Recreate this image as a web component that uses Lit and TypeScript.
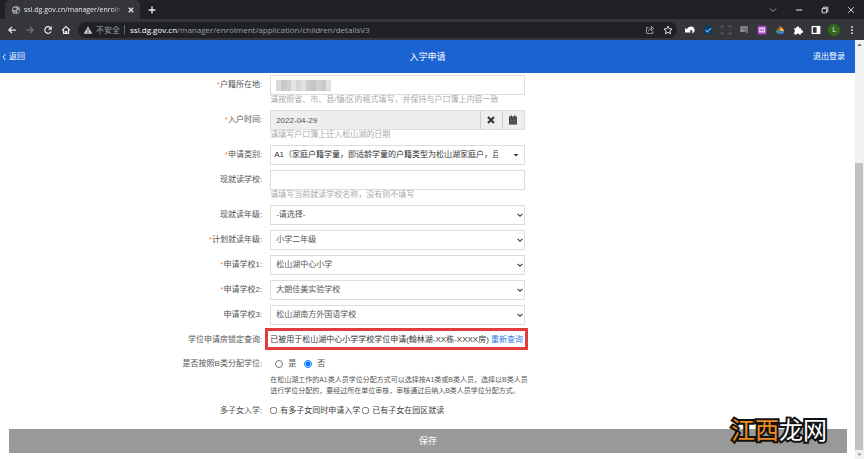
import { LitElement, html, css, svg, nothing } from "lit";
import { customElement } from "lit/decorators.js";

const chevron = html`<svg class="chev" viewBox="0 0 8 8" aria-hidden="true"><path d="M1.6 2.8 4 5.2 6.4 2.8" fill="none" stroke="#444" stroke-width="1.2"/></svg>`;
const caret = html`<svg class="chev caret" viewBox="0 0 8 8" aria-hidden="true"><path d="M1.6 3h4.8L4 5.6z" fill="#333"/></svg>`;

const glyph = (body: unknown, cls = "") =>
  html`<svg class="ico ${cls}" viewBox="0 0 16 16" aria-hidden="true">${body}</svg>`;

@customElement("browser-bar")
class BrowserBar extends LitElement {
  static styles = css`
    :host { display: block; background: #202124; color: #e8eaed; font: 8px/12px "Open Sans", "Noto Sans CJK SC", sans-serif; }
    button { all: unset; display: flex; align-items: center; justify-content: center; width: 10px; height: 10px; flex: none; }
    .ico { display: block; width: 10px; height: 10px; flex: none; }
    .tabs { display: flex; align-items: center; height: 19px; }
    .tab { display: flex; align-items: center; align-self: stretch; box-sizing: border-box; width: 135px; margin: 0 0 0 5px; padding: 0 4px 0 6px; gap: 3px; background: #35363a; border-radius: 5px 5px 0 0; }
    .title { flex: 1; min-width: 0; white-space: nowrap; font-size: 7px; mask-image: linear-gradient(90deg, #000 88%, transparent); }
    .plus { margin-left: 7px; }
    .win { display: flex; gap: 16px; margin-left: auto; padding-right: 8px; }
    .bar { display: flex; align-items: center; height: 21px; background: #35363a; }
    .nav { display: flex; gap: 8px; padding: 0 7px; }
    .url { display: flex; align-items: center; flex: 1; min-width: 0; height: 16px; box-sizing: border-box; padding: 0 4px 0 5px; border-radius: 8px; background: #202124; color: #9aa0a6; white-space: nowrap; }
    .unsafe { margin-left: 3px; }
    .sep { width: 1px; height: 9px; margin: 0 5px 0 4px; background: #6b6e72; }
    .addr { flex: 1; min-width: 0; overflow: hidden; }
    .addr b { font-weight: 400; color: #fff; }
    .acts { display: flex; gap: 8px; }
    .ext { display: flex; align-items: center; gap: 8px; padding: 0 7px 0 8px; }
    .avatar { width: 12px; height: 12px; margin: 0 -1px; border-radius: 50%; background: #33691e; color: #fff; font-size: 7px; }
  `;
  render() {
    const line = (d: string, w = 2, c = "#e8eaed") => svg`<path d=${d} fill="none" stroke=${c} stroke-width=${w}/>`;
    return html`
      <div class="tabs">
        <div class="tab">
          ${glyph(svg`<circle cx="8" cy="8" r="6.5" fill="#9aa0a6"/><path d="M3 5.5 7 4l2 2-2 2.500H4.500zM9.500 9l3-1.500 1 2-3 3.500zM5 10.500l2.500 1v2z" fill="#35363a"/>`)}
          <span class="title">ssl.dg.gov.cn/manager/enroln</span>
          <button aria-label="关闭标签页">${glyph(line("M4.500 4.500l7 7M11.500 4.500l-7 7"))}</button>
        </div>
        <button class="plus" aria-label="新标签页">${glyph(line("M8 2.500v11M2.500 8h11", 2.2))}</button>
        <div class="win">
          <button aria-label="搜索标签页">${glyph(line("M3 5.500l5 5 5-5", 1.4, "#a5a7aa"))}</button>
          <button aria-label="最小化">${glyph(line("M3 8h10", 1.6))}</button>
          <button aria-label="还原">${glyph(line("M3.500 5.500h7v7h-7zM5.500 5.500v-2h7v7h-2", 1.4))}</button>
          <button aria-label="关闭">${glyph(line("M3.500 3.500l9 9M12.500 3.500l-9 9", 1.4))}</button>
        </div>
      </div>
      <div class="bar">
        <div class="nav">
          <button aria-label="后退">${glyph(line("M14 8H3M8 3 3 8l5 5"))}</button>
          <button aria-label="前进">${glyph(line("M2 8h11M8 3l5 5-5 5", 2, "#75777b"))}</button>
          <button aria-label="刷新">${glyph(svg`${line("M12.800 10.500A5.300 5.300 0 1 1 12 4.500")}<path d="M14 1.500v6H8z" fill="#e8eaed"/>`)}</button>
          <button aria-label="主页">${glyph(line("M1.500 8.500 8 2.500l6.500 6M4 7v6.500h8V7M7 13.500v-3h2v3", 1.8))}</button>
        </div>
        <div class="url">
          ${glyph(svg`<path d="M8 2 15 14H1z" fill="#c4c7ca"/><path d="M8 6.500v3.500M8 11v1.500" stroke="#202124" stroke-width="1.400"/>`)}
          <span class="unsafe">不安全</span><span class="sep"></span>
          <span class="addr"><b>ssl.dg.gov.cn</b>/manager/enrolment/application/children/detailsV3</span>
          <div class="acts">
            <button aria-label="分享">${glyph(line("M6 4H2.500v9.500h10V10M5.500 10c.5-3 3-4.500 5.500-4.500M10 2l4 3.500-4 3.500z", 1.3, "#b0b3b7"))}</button>
            <button aria-label="收藏">${glyph(line("M8 1.800l1.900 4.200 4.500.5-3.400 3 1 4.500L8 11.700 4 14l1-4.500-3.400-3 4.500-.5z", 1.5))}</button>
          </div>
        </div>
        <div class="ext">
          <button aria-label="扩展 1">${glyph(svg`<path d="M0 12V4.500L3 7C5 2.500 11 1 14 4.500c3 3.500 1 8-3 9.500 2-3 1-6-2-5.500-1.500.5-1 2 0 3.500z" fill="#fff"/>`)}</button>
          <button aria-label="扩展 2">${glyph(svg`<rect x="1" y="1" width="14" height="14" rx="2" fill="#12395f"/>${line("M4 8l3 3 6-6", 2.2, "#62b5ff")}`)}</button>
          <button aria-label="扩展 3">${glyph(line("M1 5V1.500h4M11 1.500h4V5M15 11v3.500h-4M5 14.500H1V11", 1.4, "#686a6e"))}</button>
          <button aria-label="扩展 4">${glyph(svg`<path d="M2 2h12v12l-4-3H2z" fill="#8d8f92"/>${line("M4 5h6v3M12 5v6M7 7l6 6", 1, "#45474b")}`)}</button>
          <button aria-label="扩展 5">${glyph(svg`<rect x="1" y="1" width="14" height="14" rx="2" fill="#a344c5"/><rect x="3" y="4" width="10" height="8" fill="#f3dcfa"/>${line("M5 10V6l3 4V6M10 6v4M10 8h2", 1, "#8e35ac")}`)}</button>
          <button aria-label="扩展 6">${glyph(svg`<path d="M8 2 1.500 10 4 14l6-8z" fill="#2aa567"/><path d="M8 2q5 2 7 8H9L6 6z" fill="#fbbf2d"/><path d="M4 14l3-4h8l-2 4z" fill="#3b82f6"/><path d="M8 2 4.500 6.500 8 8l2-3z" fill="#e8483b"/>`)}</button>
          <button aria-label="扩展程序">${glyph(svg`<path d="M2 5h3.500a2.300 2.300 0 1 1 4.500 0H13v3.500a2.200 2.200 0 1 1 0 4V15H9.800a2.200 2.200 0 0 0-4.100 0H2v-3.800a2 2 0 0 0 0-3.700z" fill="#fff"/>`)}</button>
          <button aria-label="侧边栏">${glyph(svg`<rect x="2" y="2.500" width="12" height="11" fill="none" stroke="#fff" stroke-width="2"/><path d="M9 2.500h5v11H9z" fill="#fff"/>`)}</button>
          <button class="avatar" aria-label="用户">L</button>
          <button aria-label="菜单">${glyph(svg`<circle cx="8" cy="3" r="1.500" fill="#e8eaed"/><circle cx="8" cy="8" r="1.500" fill="#e8eaed"/><circle cx="8" cy="13" r="1.500" fill="#e8eaed"/>`)}</button>
        </div>
      </div>`;
  }
}

interface Choice { id: string; label: string; value: string; required?: boolean; }
const choices: Choice[] = [
  { id: "grade", label: "现就读年级", value: "-请选择-" },
  { id: "plan", label: "计划就读年级", value: "小学二年级", required: true },
  { id: "s1", label: "申请学校1", value: "松山湖中心小学", required: true },
  { id: "s2", label: "申请学校2", value: "大朗佳美实验学校", required: true },
  { id: "s3", label: "申请学校3", value: "松山湖南方外国语学校" },
];
const mosaic = ["#d9d9d9", "#c9c9c9", "#cfcfcf", "#e3e3e3", "#d6d6d6", "#e0e0e0", "#cdcdcd", "#c6c6c6", "#d2d2d2", "#c9c9c9", "#e0e0e0"];

@customElement("app-root")
class AppRoot extends LitElement {
  static styles = css`
    :host { display: flex; flex-direction: column; min-height: 100vh; background: #fff; color: #555; font: 8px/12px "Liberation Sans", "Noto Sans CJK SC", sans-serif; }
    * { box-sizing: border-box; }
    .view { display: flex; flex: 1; position: relative; }
    .page { flex: 1; min-width: 0; }
    .head { display: grid; grid-template-columns: 1fr auto 1fr; align-items: center; height: 33px; background: #1c63d2; color: #fff; }
    .head a { color: #fff; text-decoration: none; }
    .back { display: flex; align-items: center; gap: 1px; padding-left: 1px; }
    .back svg { width: 7px; height: 8px; }
    .out { justify-self: end; padding-right: 10px; }
    h1 { margin: 0; font-size: 9px; font-weight: 400; }
    form { display: flex; flex-direction: column; gap: 5px; padding-top: 2px; }
    .row { display: grid; grid-template-columns: minmax(0, 316fr) minmax(0, 298fr) minmax(0, 386fr); }
    .label { padding-right: 8px; text-align: right; line-height: 20px; white-space: nowrap; }
    .req { color: #f08a4b; }
    .field { position: relative; height: 20px; }
    .text, select { display: block; width: 100%; height: 20px; margin: 0; padding: 0 5px; border: 1px solid #ddd; border-radius: 0; background: #fff; color: #555; font: inherit; appearance: none; outline: none; }
    .wide { padding: 0 26px 0 3px; color: #333; }
    .chev { position: absolute; right: 1px; top: 6px; width: 8px; height: 8px; pointer-events: none; }
    .caret { right: 5px; }
    .hint { height: 10px; color: #aaa; line-height: 10px; white-space: nowrap; }
    .mosaic { position: absolute; left: 6px; top: 5px; display: flex; height: 11px; }
    .mosaic i { width: 5px; }
    .date { display: flex; border: 1px solid #ddd; background: #eee; }
    .date .text { flex: 1; min-width: 0; height: 100%; padding: 0 5px; border: 0; background: none; }
    .date button { display: flex; align-items: center; justify-content: center; width: 22px; padding: 0; border: 0; border-left: 1px solid #ccc; background: none; }
    .date svg { width: 10px; height: 10px; }
    .line { line-height: 19px; }
    .mark { height: 22px; margin: -2px -3px -1px -5px; padding: 0 0 0 2px; border: 3px solid #e23c3c; color: #333; line-height: 17px; white-space: nowrap; }
    .mark a { color: #2f7be5; text-decoration: none; }
    .opts { display: flex; align-items: center; height: 19px; white-space: nowrap; }
    .opts label { display: flex; align-items: center; }
    .radio { gap: 8px; padding-left: 5px; }
    .radio label { gap: 5px; }
    .radio input { width: 8px; height: 8px; margin: 0; }
    .check { gap: 2px; color: #444; }
    .check label { gap: 3px; }
    .check input { width: 7px; height: 7px; margin: 0; }
    .note { margin: 1px 0 0; font-size: 7px; line-height: 11px; white-space: nowrap; }
    .save { height: 24px; margin: 4px 8px 6px 9px; padding: 0; border: 0; background: #999; color: #fff; font: inherit; font-size: 9px; }
    .scroll { display: flex; flex-direction: column; width: 9px; background: #f1f1f1; }
    .scroll svg { width: 9px; height: 9px; flex: none; }
    .before { flex: 114; }
    .thumb { flex: 287; margin-right: 1px; background: #c1c1c1; }
    .brand { position: absolute; right: 37px; bottom: 15px; color: #fff; font: 400 24px/30px "Noto Sans CJK SC", sans-serif; -webkit-text-stroke: 4px #111; paint-order: stroke fill; white-space: nowrap; }
    .brand span { color: #ef8a1d; }
  `;

  private label(text: string, id: string, required = false) {
    return html`<label class="label" for=${id}>${required ? html`<span class="req">*</span>` : nothing}${text}:</label>`;
  }

  render() {
    return html`
      <browser-bar></browser-bar>
      <div class="view">
        <main class="page">
          <header class="head">
            <a class="back" href="#"><svg viewBox="0 0 7 8" aria-hidden="true"><path d="M4.500 1 2 4l2.500 3" fill="none" stroke="#fff" stroke-width=".9"/></svg>返回</a>
            <h1>入学申请</h1>
            <a class="out" href="#">退出登录</a>
          </header>
          <form @submit=${(e: Event) => e.preventDefault()}>
            <div class="row">
              ${this.label("户籍所在地", "home", true)}
              <div>
                <div class="field"><input class="text" id="home"><div class="mosaic">${mosaic.map((c) => html`<i style="background:${c}"></i>`)}</div></div>
                <div class="hint">请按照省、市、县/镇/区的格式填写，并保持与户口簿上内容一致</div>
              </div>
            </div>
            <div class="row">
              ${this.label("入户时间", "date", true)}
              <div>
                <div class="field date">
                  <input class="text" id="date" value="2022-04-29" readonly>
                  <button type="button" aria-label="清除"><svg viewBox="0 0 10 10"><path d="M2 2l6 6M8 2 2 8" stroke="#333" stroke-width="2"/></svg></button>
                  <button type="button" aria-label="选择日期"><svg viewBox="0 0 10 10"><path d="M1 1.500h1.500V.5h1.500v1h2v-1h1.500v1H9V9.500H1z" fill="#444"/><path d="M1.500 3.500h7M1.500 5.500h7M1.500 7.500h7M3.500 3.500v6M6.500 3.500v6" stroke="#777" stroke-width=".4"/></svg></button>
                </div>
                <div class="hint">请填写户口簿上迁入松山湖的日期</div>
              </div>
            </div>
            <div class="row">
              ${this.label("申请类别", "type", true)}
              <div class="field"><select class="wide" id="type"><option>A1（家庭户籍学童，即适龄学童的户籍类型为松山湖家庭户，且</option></select>${caret}</div>
            </div>
            <div class="row">
              ${this.label("现就读学校", "school")}
              <div>
                <div class="field"><input class="text" id="school"></div>
                <div class="hint">请填写当前就读学校名称，没有则不填写</div>
              </div>
            </div>
            ${choices.map((c) => html`<div class="row">
              ${this.label(c.label, c.id, c.required)}
              <div class="field"><select id=${c.id}><option>${c.value}</option></select>${chevron}</div>
            </div>`)}
            <div class="row">
              <span class="label line">学位申请房锁定查询:</span>
              <div class="mark">已被用于松山湖中心小学学校学位申请(翰林湖-XX栋-XXXX房) <a href="#">重新查询</a></div>
            </div>
            <div class="row">
              <span class="label line" id="b">是否按照B类分配学位:</span>
              <div>
                <div class="opts radio" role="radiogroup" aria-labelledby="b">
                  <label><input type="radio" name="b">是</label>
                  <label><input type="radio" name="b" checked>否</label>
                </div>
                <p class="note">在松山湖工作的A1类人员学位分配方式可以选择按A1类或B类人员，选择以B类人员<br>进行学位分配的，要经过所在单位审核，审核通过后纳入B类人员学位分配方式。</p>
              </div>
            </div>
            <div class="row">
              <span class="label line">多子女入学:</span>
              <div class="opts check">
                <label><input type="checkbox">有多子女同时申请入学</label>
                <label><input type="checkbox">已有子女在园区就读</label>
              </div>
            </div>
            <button class="save">保存</button>
          </form>
        </main>
        <div class="scroll" aria-hidden="true">
          <svg viewBox="0 0 9 9"><path d="M2.500 6h4l-2-2.500z" fill="#555"/></svg>
          <div class="before"></div><div class="thumb"></div>
          <svg viewBox="0 0 9 9"><path d="M2.500 3.500h4l-2 2.500z" fill="#999"/></svg>
        </div>
        <div class="brand"><span>江西</span>龙网</div>
      </div>`;
  }
}
